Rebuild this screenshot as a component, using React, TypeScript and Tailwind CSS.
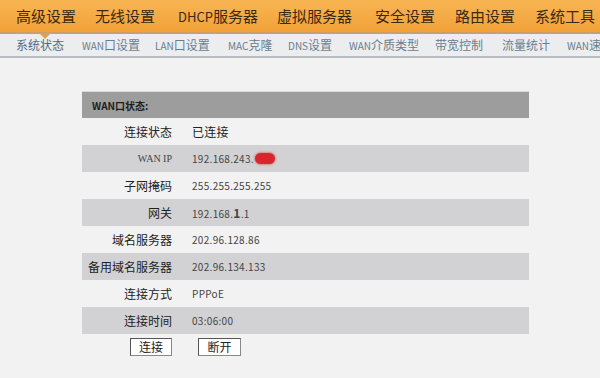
import React from "react";

const top: [string, number][] = [
  ["高级设置", 79],
  ["无线设置", 83],
  ["DHCP服务器", 99],
  ["虚拟服务器", 98],
  ["安全设置", 80],
  ["路由设置", 80],
  ["系统工具", 65],
];
const sub: [string, number][] = [
  ["系统状态", 66],
  ["WAN口设置", 73],
  ["LAN口设置", 73],
  ["MAC克隆", 60],
  ["DNS设置", 61],
  ["WAN介质类型", 86],
  ["带宽控制", 67],
  ["流量统计", 65],
  ["WAN速", 40],
];

function Mixed({ text, latin }: { text: string; latin: string }) {
  const parts = text.split(/([A-Za-z]+)/).filter(Boolean);
  return (
    <>
      {parts.map((p, i) =>
        /^[A-Za-z]+$/.test(p) ? (
          <span key={i} className={latin}>{p}</span>
        ) : (
          <span key={i}>{p}</span>
        )
      )}
    </>
  );
}

const rows: [string, React.ReactNode][] = [
  ["连接状态", <span className="text-[12px] text-[#222]">已连接</span>],
  ["WAN IP", (
    <span className="flex items-center">
      192.168.243.
      <span className="inline-block w-[20px] h-[11px] rounded-full bg-[#d8262e] ml-[1px] shadow-[0_0_2px_1px_rgba(230,60,70,0.5)]" />
    </span>
  )],
  ["子网掩码", "255.255.255.255"],
  ["网关", <span>192.168.<span className="font-bold text-[12px]">1</span>.1</span>],
  ["域名服务器", "202.96.128.86"],
  ["备用域名服务器", "202.96.134.133"],
  ["连接方式", "PPPoE"],
  ["连接时间", "03:06:00"],
];

export default function App() {
  return (
    <div className="w-[600px] h-[378px] overflow-hidden bg-[#f2f2f2] relative" style={{ fontFamily: '"Noto Sans CJK SC", "DejaVu Sans", sans-serif' }}>
      <div className="h-[34px] bg-gradient-to-b from-[#f8b452] to-[#f2a238] border-b-[2px] border-[#c9a06a] flex items-center pl-[16px] text-[15px] text-[#3b2a12] relative">
        {top.map(([t, w]) => (
          <span key={t} className="shrink-0 whitespace-nowrap" style={{ width: w }}>
            <Mixed text={t} latin="text-[13px]" />
          </span>
        ))}
        <span className="absolute left-[39px] bottom-[-7px] w-0 h-0 border-l-[6px] border-r-[6px] border-t-[6px] border-l-transparent border-r-transparent border-t-[#d9a354]" />
      </div>
      <div className="h-[24px] bg-[#ecedef] border-b-[2px] border-[#b9bcc0] flex items-center pl-[16px] text-[12px] text-[#6a7d8e]">
        {sub.map(([t, w], i) => (
          <span key={t} className={`shrink-0 whitespace-nowrap ${i === 0 ? "text-[#4f6b86]" : ""}`} style={{ width: w }}>
            <Mixed text={t} latin="text-[10px]" />
          </span>
        ))}
      </div>
      <div className="pt-[33px] pl-[82px]">
        <div className="w-[447px]">
          <div className="h-[27px] bg-[#9d9d9d] border-t border-[#dadada] flex items-center pl-[10px] text-[10px] font-bold text-[#1e1e1e]">WAN口状态:</div>
          {rows.map(([k, v], i) => (
            <div key={k} className={`h-[27px] flex items-center text-[11px] text-[#333] ${i % 2 === 1 ? "bg-[#d2d2d4]" : "bg-[#f2f2f2]"}`}>
              <div
                className={`w-[90px] text-right ${k === "WAN IP" ? "text-[10px] text-[#444]" : "text-[12px] text-[#222]"}`}
                style={k === "WAN IP" ? { fontFamily: '"Liberation Serif", serif' } : undefined}
              >
                {k}
              </div>
              <div className="pl-[20px] text-[10px] tracking-[0.3px] text-[#444]">{v}</div>
            </div>
          ))}
        </div>
        <div className="flex mt-[4px] ml-[48px] gap-[26px]">
          <button className="w-[42px] h-[18px] bg-white border border-[#555] border-r-[#888] border-b-[#888] text-[12px] text-[#222] leading-none flex items-center justify-center">连接</button>
          <button className="w-[43px] h-[18px] bg-white border border-[#555] border-r-[#888] border-b-[#888] text-[12px] text-[#222] leading-none flex items-center justify-center">断开</button>
        </div>
      </div>
    </div>
  );
}
